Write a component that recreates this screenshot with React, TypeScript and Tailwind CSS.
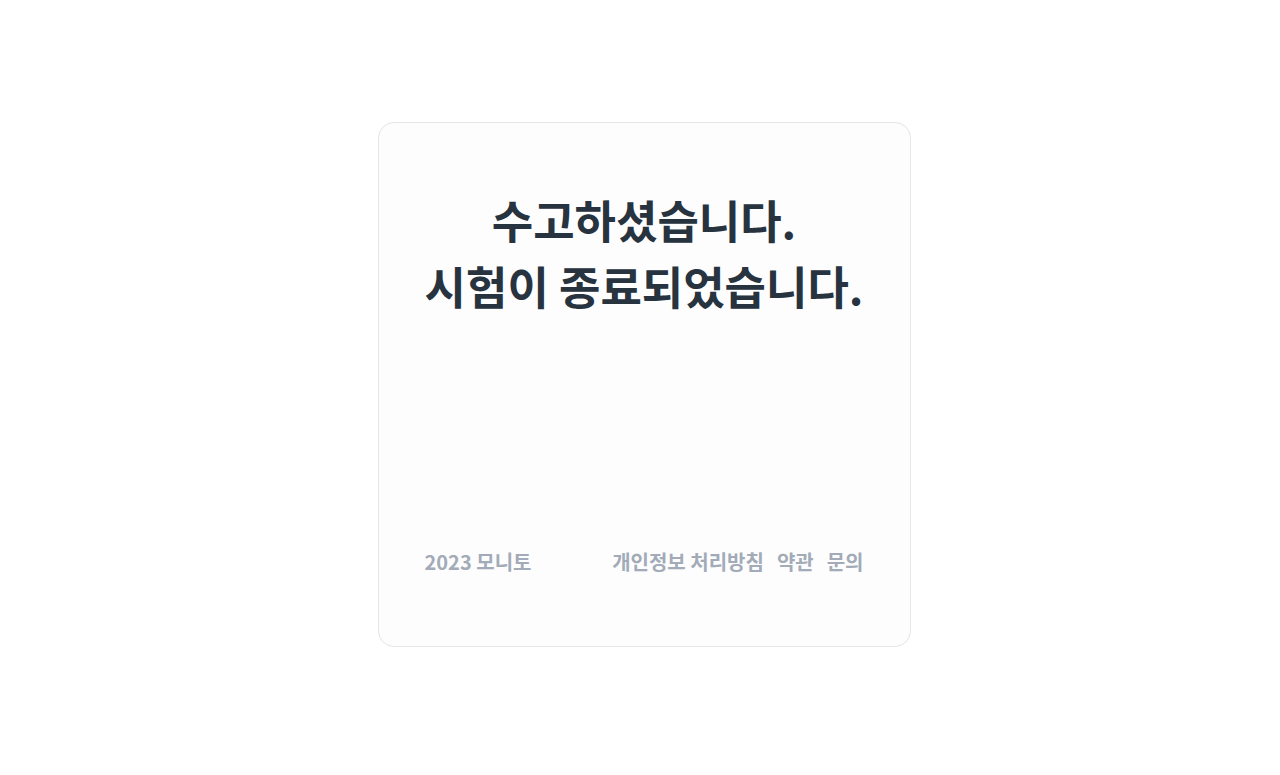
import React from "react";

export default function App() {
  return (
    <div className="w-[1280px] h-[775px] bg-white flex items-start justify-center pl-[8px]" style={{ fontFamily: '"Noto Sans CJK KR", "Noto Sans", sans-serif' }}>
      <div className="mt-[122px] w-[533px] h-[525px] rounded-[16px] border border-[#e3e5e8] bg-[#fdfdfe] flex flex-col px-[46px]">
        <h1 className="mt-[64px] text-center text-[45px] leading-[66px] font-bold text-[#27333f]">
          수고하셨습니다.
          <br />
          시험이 종료되었습니다.
        </h1>
        <div className="mt-auto mb-[70px] flex items-center justify-between text-[20px] leading-[28px] font-semibold text-[#a2abb7]">
          <span>2023 모니토</span>
          <div className="flex gap-[13px]">
            <span>개인정보 처리방침</span>
            <span>약관</span>
            <span>문의</span>
          </div>
        </div>
      </div>
    </div>
  );
}
